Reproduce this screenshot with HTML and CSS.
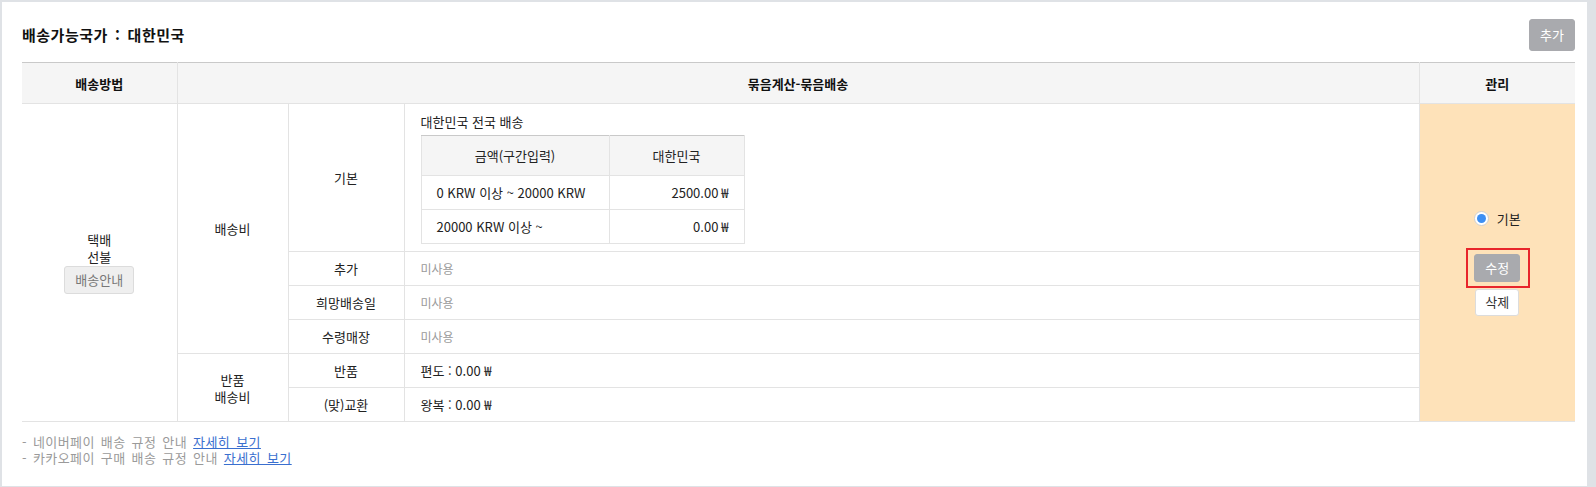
FILE: index.html
```html
<!DOCTYPE html>
<html lang="ko">
<head>
<meta charset="utf-8">
<title>배송가능국가</title>
<link rel="stylesheet" href="styles.css">
</head>
<body>
<div class="panel">
  <div class="panel-head">
    <h2 class="title">배송가능국가 : 대한민국</h2>
    <button class="btn btn-gray btn-add">추가</button>
  </div>
  <table class="ship">
    <colgroup>
      <col class="c1"><col class="c2"><col class="c3"><col class="c4"><col class="c5">
    </colgroup>
    <thead>
      <tr><th>배송방법</th><th colspan="3">묶음계산-묶음배송</th><th>관리</th></tr>
    </thead>
    <tbody>
      <tr>
        <td rowspan="6" class="method">
          <div class="line">택배</div>
          <div class="line">선불</div>
          <button class="btn btn-light">배송안내</button>
        </td>
        <td rowspan="4">배송비</td>
        <td>기본</td>
        <td class="content base">
          <div class="region">대한민국 전국 배송</div>
          <table class="inner">
            <colgroup><col class="i1"><col class="i2"></colgroup>
            <thead><tr><th>금액(구간입력)</th><th>대한민국</th></tr></thead>
            <tbody>
              <tr><td>0 KRW 이상 ~ 20000 KRW</td><td class="num">2500.00 ₩</td></tr>
              <tr><td>20000 KRW 이상 ~</td><td class="num">0.00 ₩</td></tr>
            </tbody>
          </table>
        </td>
        <td rowspan="6" class="manage">
          <label class="radio"><span class="dot"></span><span>기본</span></label>
          <div class="actions">
            <span class="mark"><button class="btn btn-gray btn-edit">수정</button></span>
            <button class="btn btn-white">삭제</button>
          </div>
        </td>
      </tr>
      <tr><td>추가</td><td class="content muted">미사용</td></tr>
      <tr><td>희망배송일</td><td class="content muted">미사용</td></tr>
      <tr><td>수령매장</td><td class="content muted">미사용</td></tr>
      <tr><td rowspan="2">반품<br>배송비</td><td>반품</td><td class="content">편도 : 0.00 ₩</td></tr>
      <tr><td>(맞)교환</td><td class="content">왕복 : 0.00 ₩</td></tr>
    </tbody>
  </table>
  <div class="notes">
    <p>- 네이버페이 배송 규정 안내 <a href="#">자세히 보기</a></p>
    <p>- 카카오페이 구매 배송 규정 안내 <a href="#">자세히 보기</a></p>
  </div>
</div>
</body>
</html>
```
FILE: styles.css
```css
html, body {
  margin: 0;
  padding: 0;
  background: #dfe2e6;
}
body {
  font-family: "Noto Sans CJK KR", "Noto Sans", sans-serif;
  font-size: 13px;
  color: #222;
}
.panel {
  background: #fff;
  margin: 2px 9px 0 2px;
  height: 484px;
  box-sizing: border-box;
  padding: 17px 12px 0 20px;
}
.panel-head {
  display: flex;
  justify-content: space-between;
  align-items: center;
  height: 32px;
  margin-bottom: 11px;
}
.title {
  margin: 0;
  font-size: 15px;
  font-weight: bold;
  line-height: 20px;
  letter-spacing: 0.5px;
  word-spacing: 2.5px;
  color: #111;
}
.btn {
  font-family: inherit;
  font-size: 13px;
  line-height: 16px;
  padding: 0;
  border-radius: 3px;
  cursor: pointer;
}
.btn-gray {
  background: #a9aaae;
  border: 1px solid #a9aaae;
  color: #fff;
}
.btn-add {
  width: 46px;
  height: 32px;
}
.btn-light {
  background: #efefef;
  border: 1px solid #dcdcdc;
  color: #777;
  width: 70px;
  height: 28px;
  margin-top: 1px;
}
.btn-white {
  background: #fff;
  border: 1px solid #dcdcdc;
  color: #333;
  width: 44px;
  height: 27px;
}
.btn-edit {
  display: block;
  width: 46px;
  height: 28px;
}
.mark {
  position: relative;
  display: block;
}
.mark::after {
  content: "";
  position: absolute;
  left: -8px;
  right: -10px;
  top: -6px;
  bottom: -6px;
  border: 2px solid #e8252b;
  pointer-events: none;
}
.ship {
  width: 100%;
  table-layout: fixed;
  border-collapse: collapse;
}
.c1 { width: 155px; }
.c2 { width: 111px; }
.c3 { width: 116px; }
.c5 { width: 156px; }
.ship th, .ship td {
  border: 1px solid #e3e3e3;
  text-align: center;
  vertical-align: middle;
  padding: 0 8px;
  line-height: 17px;
}
.ship > thead > tr > th {
  background: #f5f5f5;
  border-top: 1px solid #c9c9c9;
  font-weight: bold;
  height: 40px;
  color: #111;
}
.ship > thead > tr > th:first-child,
.ship > tbody > tr > td.method { border-left: 0; }
.ship > thead > tr > th:last-child,
.ship > tbody > tr > td.manage { border-right: 0; }
.ship > tbody > tr > td { height: 33px; }
.ship > tbody > tr > td.content {
  text-align: left;
  padding: 0 15px 0 16px;
}
.ship > tbody > tr > td.base {
  padding-top: 8px;
  padding-bottom: 7px;
}
.muted { color: #9a9a9a; font-size: 12px; }
.region { line-height: 20px; margin-bottom: 3px; }
.line { line-height: 17px; }
.inner {
  width: 324px;
  table-layout: fixed;
  border-collapse: collapse;
}
.i1 { width: 188px; }
.inner th, .inner td {
  border: 1px solid #e3e3e3;
  height: 33px;
  padding: 0 15px;
  text-align: left;
  font-weight: normal;
  line-height: 17px;
}
.inner th {
  background: #f5f5f5;
  border-top: 1px solid #c9c9c9;
  text-align: center;
  height: 39px;
}
.inner td.num { text-align: right; }
.manage {
  background: #fee2b9;
}
.radio {
  display: inline-flex;
  align-items: center;
  gap: 8px;
  line-height: 17px;
}
.dot {
  width: 13px;
  height: 13px;
  border-radius: 50%;
  background: #fff;
  border: 1px solid #cfcfcf;
  position: relative;
  box-sizing: content-box;
}
.dot::after {
  content: "";
  position: absolute;
  left: 2px;
  top: 2px;
  width: 9px;
  height: 9px;
  border-radius: 50%;
  background: #3d8ff3;
}
.actions {
  display: flex;
  flex-direction: column;
  align-items: center;
  gap: 7px;
  margin-top: 25px;
}
.notes {
  margin-top: 12px;
  color: #9a9a9a;
  letter-spacing: 0.4px;
  word-spacing: 2px;
}
.notes p {
  margin: 0;
  line-height: 16px;
}
.notes a {
  color: #3a6fcf;
  text-decoration: underline;
}
```
